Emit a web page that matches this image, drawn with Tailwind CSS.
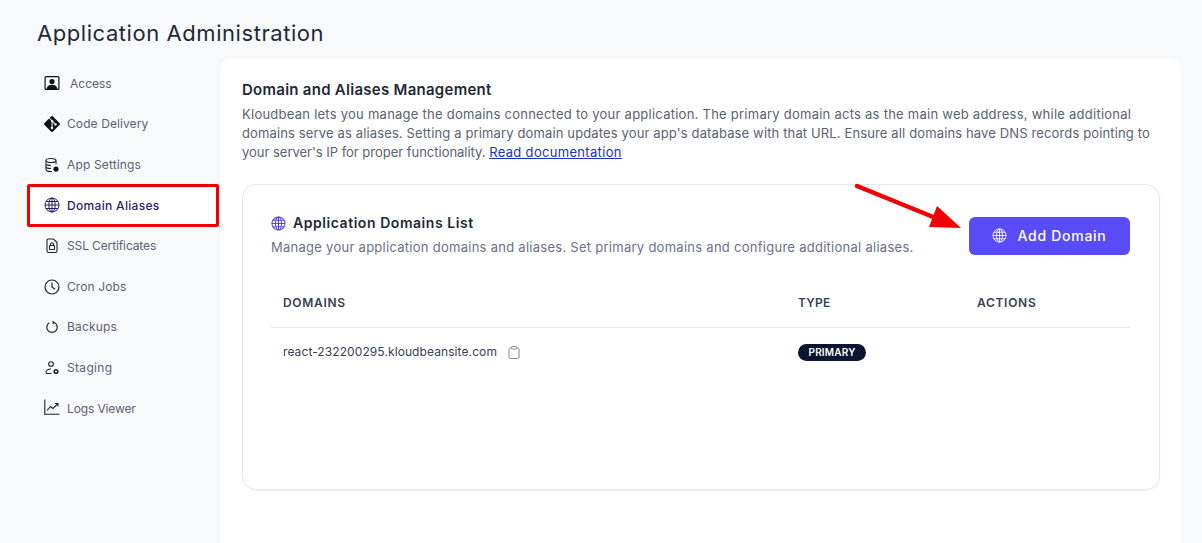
<!DOCTYPE html>
<html><head><meta charset="utf-8"><script src="https://cdn.jsdelivr.net/npm/@tailwindcss/browser@4"></script></head>
<body class="m-0 h-[543px] overflow-hidden bg-[#f8f9fb] font-['Inter',sans-serif] relative">
<h1 class="pl-[37px] pt-[19px] h-[58px] text-[22px] leading-[28px] font-normal text-[#1f2937] tracking-[0.56px]">Application Administration</h1>
<div class="flex items-start">
  <nav class="w-[220px] shrink-0 pt-[6px] pl-[29px] pr-[3px] flex flex-col text-[12px] text-[#5b6270]">
    <a class="h-[40.5px] flex items-center gap-[12px] pl-[15px]"><svg class="w-4 h-4 -mt-[3px]" viewBox="0 0 16 16" fill="#111"><path d="M2 1h12a1.500 1.500 0 0 1 1.500 1.500v11A1.500 1.500 0 0 1 14 15H2a1.500 1.500 0 0 1-1.500-1.500v-11A1.500 1.500 0 0 1 2 1Zm0 1.200a.3.300 0 0 0-.3.300v11c0 .2.100.3.300.3h.6c.3-2.500 2.500-4 5.400-4s5.100 1.500 5.400 4h.6c.2 0 .3-.1.3-.3v-11a.3.300 0 0 0-.3-.3Z"/><circle cx="8" cy="6.500" r="2.600"/></svg><span class="ml-[-2px] tracking-[0px]">Access</span></a>
    <a class="h-[40.5px] flex items-center gap-[7px] pl-[15px] tracking-[0.09px]"><svg class="w-4 h-4 -mt-[2px]" viewBox="0 0 16 16" fill="#111"><path d="M15.700 7.300 8.700.3a1 1 0 0 0-1.400 0L5.700 1.900l2 2a1.200 1.200 0 0 1 1.500 1.500l1.900 1.900a1.200 1.200 0 1 1-.7.700L8.600 6.200v4.700a1.200 1.200 0 1 1-1-.1V6.100a1.200 1.200 0 0 1-.6-1.600L5 2.600.3 7.300a1 1 0 0 0 0 1.400l7 7a1 1 0 0 0 1.400 0l7-7a1 1 0 0 0 0-1.400Z"/></svg><span class="-mt-[1px]">Code Delivery</span></a>
    <a class="h-[40.5px] flex items-center gap-[7px] pl-[15px] tracking-[0.15px]"><svg class="w-4 h-4" viewBox="0 0 16 16" fill="none" stroke="#222" stroke-width="1.100"><ellipse cx="7" cy="3.500" rx="5" ry="2"/><path d="M2 3.500v9c0 1.100 2.200 2 5 2h1M12 3.500v4M2 6.500c0 1.100 2.200 2 5 2M2 9.500c0 1.100 2.200 2 5 2"/><circle cx="12" cy="12" r="2.600" fill="#111" stroke="none"/></svg>App Settings</a>
    <a class="h-[40.5px] flex items-center gap-[7px] pl-[15px] bg-white text-[#2a1f66] font-medium tracking-[0.32px]"><svg class="w-4 h-4 -mt-[2px]" viewBox="0 0 16 16" fill="none" stroke="#2a1f66" stroke-width="1"><circle cx="8" cy="8" r="7"/><ellipse cx="8" cy="8" rx="3.200" ry="7"/><path d="M8 1v14M1 8h14M2 4.500h12M2 11.500h12"/></svg>Domain Aliases</a>
    <a class="h-[40.5px] flex items-center gap-[7px] pl-[15px] tracking-[-0.12px]"><svg class="w-4 h-4" viewBox="0 0 16 16" fill="none" stroke="#222" stroke-width="1.100"><path d="M4 1h5.500L13 4.500V13a1.500 1.500 0 0 1-1.500 1.500h-7A1.500 1.500 0 0 1 3 13V2a1 1 0 0 1 1-1Z"/><rect x="5.500" y="7.500" width="5" height="4" rx=".6"/><path d="M6.500 7.500V6.300a1.500 1.500 0 0 1 3 0v1.200"/></svg>SSL Certificates</a>
    <a class="h-[40.5px] flex items-center gap-[7px] pl-[15px] tracking-[0.1px]"><svg class="w-4 h-4" viewBox="0 0 16 16" fill="none" stroke="#222" stroke-width="1.200"><circle cx="8" cy="8" r="7"/><path d="M8 3.500V8l3 2.200"/></svg>Cron Jobs</a>
    <a class="h-[40.5px] flex items-center gap-[7px] pl-[15px] tracking-[0.18px]"><svg class="w-4 h-4" viewBox="0 0 16 16" fill="none" stroke="#222" stroke-width="1.200"><path d="M10.700 3.800a5.200 5.200 0 1 1-5.400 0"/><path d="M8.600 1.500 11.200 3.700 8.600 5.300Z" fill="#222" stroke="none"/></svg>Backups</a>
    <a class="h-[40.5px] flex items-center gap-[7px] pl-[15px] tracking-[0.32px]"><svg class="w-4 h-4" viewBox="0 0 16 16" fill="none" stroke="#222" stroke-width="1.100"><circle cx="7" cy="4" r="2.300"/><path d="M2 13c0-2.500 1.800-4 5-4M2 13.500h5.500"/><circle cx="12" cy="11.500" r="1.800" stroke-width="1.600"/></svg>Staging</a>
    <a class="h-[40.5px] flex items-center gap-[7px] pl-[15px] tracking-[-0.13px]"><svg class="w-4 h-4 -mt-[3px]" viewBox="0 0 16 16" fill="none" stroke="#222" stroke-width="1.100"><path d="M.8.500v14.700h14.700M3 11.500l3.500-4 2.500 2 5-5M11 4.500h3v3"/></svg><span class="mt-[1px]">Logs Viewer</span></a>
  </nav>
  <main class="w-[961px] h-[485px] bg-white rounded-t-[12px] pl-[22px] pr-[21px] pt-[21px]">
    <h2 class="text-[15px] leading-[22px] font-semibold text-[#1f2937] tracking-[0.27px]">Domain and Aliases Management</h2>
    <p class="mt-[4px] text-[13px] leading-[19px] text-[#5b6270]"><span class="block whitespace-nowrap tracking-[0.25px]">Kloudbean lets you manage the domains connected to your application. The primary domain acts as the main web address, while additional</span> <span class="block whitespace-nowrap tracking-[0.135px]">domains serve as aliases. Setting a primary domain updates your app's database with that URL. Ensure all domains have DNS records pointing to</span> <span class="block whitespace-nowrap"><span class="tracking-[-0.02px]">your server's IP for proper functionality.</span> <a class="text-[#1e2fb8] underline tracking-[0.32px]">Read documentation</a></span></p>
    <section class="mt-[22px] h-[306px] border border-[#e5e7eb] rounded-[14px] shadow-[0_1px_2px_rgba(0,0,0,0.05)] pl-[28px] pr-[29px] pt-[31px]">
      <div class="flex justify-between items-start">
        <div>
          <h3 class="flex items-center gap-[7px] text-[14px] leading-[14px] font-semibold text-[#1f2937] tracking-[0.55px] h-[14px]"><svg class="w-[15px] h-[15px]" viewBox="0 0 16 16" fill="none" stroke="#5b3fe0" stroke-width="1.100"><circle cx="8" cy="8" r="7"/><ellipse cx="8" cy="8" rx="3.200" ry="7"/><path d="M8 1v14M1 8h14M2 4.500h12M2 11.500h12"/></svg>Application Domains List</h3>
          <p class="mt-[7px] text-[13px] leading-[20px] text-[#6b7280] tracking-[0.27px]">Manage your application domains and aliases. Set primary domains and configure additional aliases.</p>
        </div>
        <button class="w-[161px] h-[38px] mt-[1px] pb-[2px] pr-[1px] rounded-[6px] bg-[#574cf6] text-white text-[14px] font-medium flex items-center justify-center gap-[11px] tracking-[0.72px]"><svg class="w-[15px] h-[15px]" viewBox="0 0 16 16" fill="none" stroke="#fff" stroke-width=".9"><circle cx="8" cy="8" r="7"/><ellipse cx="8" cy="8" rx="3.200" ry="7"/><path d="M8 1v14M1 8h14M2 4.500h12M2 11.500h12"/></svg>Add Domain</button>
      </div>
      <div class="mt-[27px] grid grid-cols-[515px_179px_1fr] h-[44px] border-b border-[#e5e7eb] text-[12px] font-semibold text-[#374151] items-center pl-[12px] pb-[5px] tracking-[0.7px]">
        <span>DOMAINS</span><span class="tracking-[0.2px]">TYPE</span><span>ACTIONS</span>
      </div>
      <div class="grid grid-cols-[515px_179px_1fr] items-center pl-[12px] h-[48px] text-[12px] text-[#374151]">
        <span class="flex items-center gap-[11px] tracking-[0.09px]">react-232200295.kloudbeansite.com<svg class="w-[12px] h-[13px]" viewBox="0 0 12 13" fill="none" stroke="#888" stroke-width="1"><rect x="1" y="2" width="10" height="10.500" rx="1.500"/><rect x="3.500" y=".5" width="5" height="2.500" rx=".8" fill="#fff"/></svg></span>
        <span class="w-[68px] h-[17px] rounded-full bg-[#0b1530] text-white text-[10px] leading-[16px] font-semibold text-center tracking-[0.2px]">PRIMARY</span>
      </div>
    </section>
  </main>
</div>
<div class="absolute left-[27px] top-[184px] w-[192px] h-[43px] border-[3px] border-[#f00000] rounded-[2px]"></div>
<svg class="absolute left-[850px] top-[180px]" width="120" height="60" viewBox="0 0 120 60"><path d="M7 6 L98 43" stroke="#f00000" stroke-width="4.500" stroke-linecap="round"/><path d="M87 26 L111 48 L79 47 Z" fill="#f00000"/></svg>
</body></html>
